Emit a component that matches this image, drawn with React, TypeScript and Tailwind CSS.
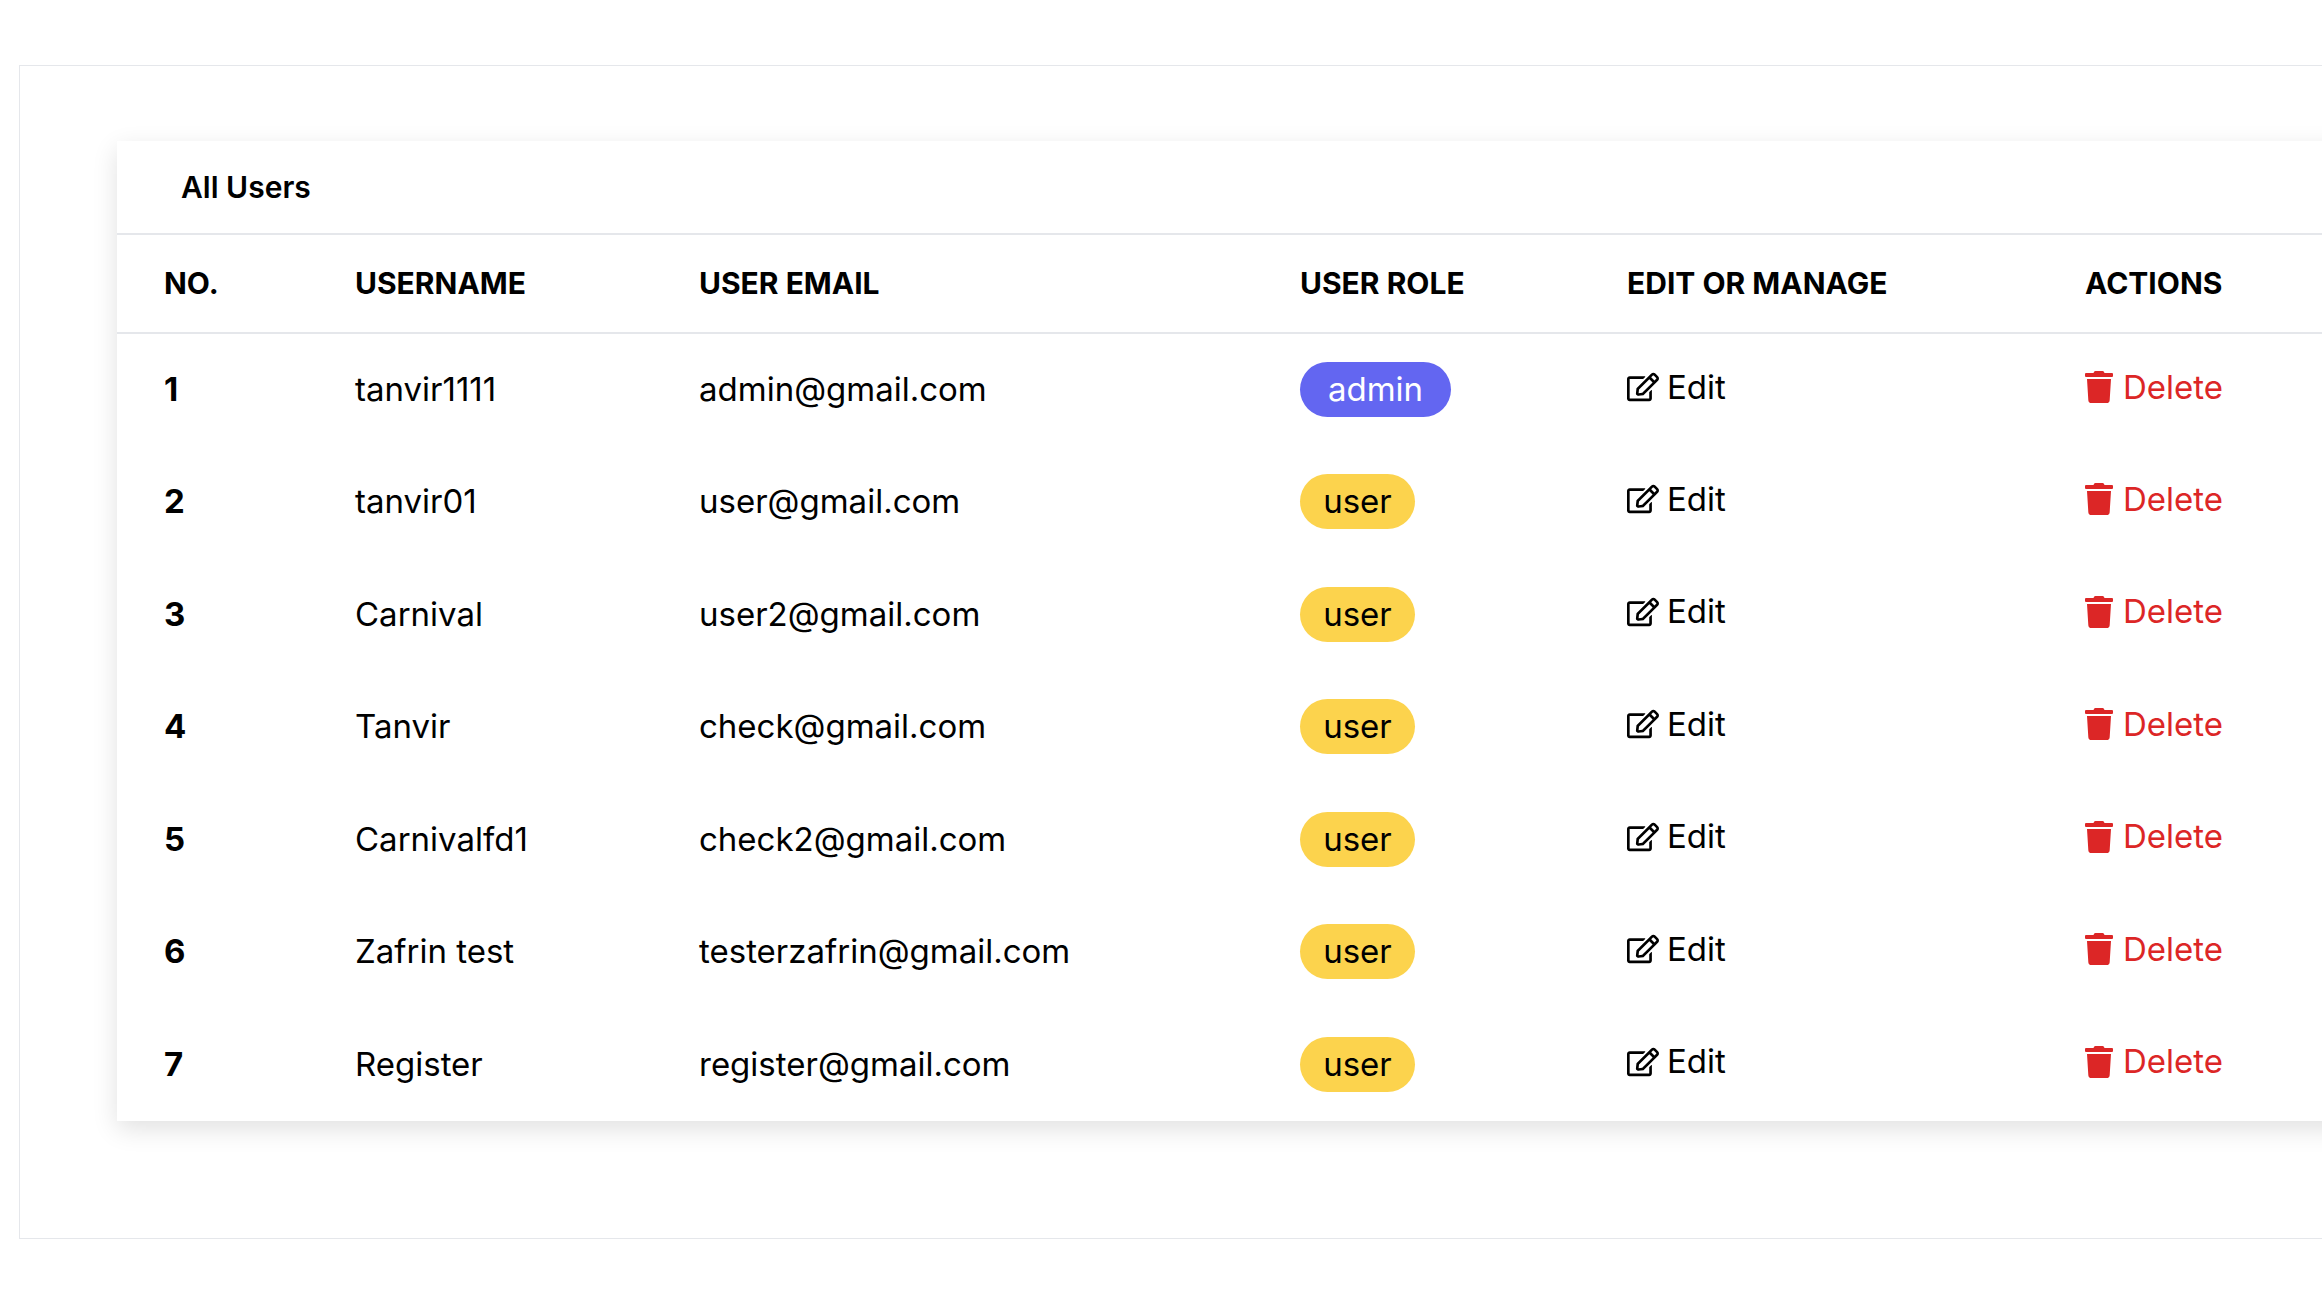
import React from "react";
import { FaRegEdit, FaTrash } from "react-icons/fa";

const users = [
  ["tanvir1111", "admin@gmail.com", "admin"],
  ["tanvir01", "user@gmail.com", "user"],
  ["Carnival", "user2@gmail.com", "user"],
  ["Tanvir", "check@gmail.com", "user"],
  ["Carnivalfd1", "check2@gmail.com", "user"],
  ["Zafrin test", "testerzafrin@gmail.com", "user"],
  ["Register", "register@gmail.com", "user"],
];

export default function App() {
  return (
    <div className="w-[2322px] h-[1306px] bg-white overflow-hidden pt-[65px] pl-[19px]" style={{ fontFamily: "Inter, 'Open Sans', sans-serif" }}>
      <div className="w-[2400px] h-[1174px] border border-gray-200 pl-[97px] pt-[75px]">
        <div className="w-[2300px] bg-white shadow-[0_8px_24px_rgba(0,0,0,0.12)] text-black">
          <div className="h-[94px] flex items-center pl-[64px] text-[30px] font-semibold border-b-2 border-gray-200">All Users</div>
          <table className="table-fixed border-collapse text-left">
            <colgroup>
              <col className="w-[238px]" />
              <col className="w-[344px]" />
              <col className="w-[601px]" />
              <col className="w-[327px]" />
              <col className="w-[458px]" />
              <col className="w-[330px]" />
            </colgroup>
            <thead>
              <tr className="h-[98px] border-b-2 border-gray-200 text-[30px] font-bold">
                <th className="pl-[47px]">NO.</th>
                <th>USERNAME</th>
                <th>USER EMAIL</th>
                <th>USER ROLE</th>
                <th>EDIT OR MANAGE</th>
                <th>ACTIONS</th>
              </tr>
            </thead>
            <tbody className="text-[33px]">
              {users.map(([n, e, r], i) => (
                <tr key={i} className="h-[112.5px]">
                  <td className="pl-[47px] font-bold">{i + 1}</td>
                  <td>{n}</td>
                  <td>{e}</td>
                  <td>
                    {r === "admin" ? (
                      <span className="inline-flex items-center justify-center h-[55px] w-[151px] rounded-full bg-[#6366f1] text-white">admin</span>
                    ) : (
                      <span className="inline-flex items-center justify-center h-[55px] w-[115px] rounded-full bg-[#fcd34d]">user</span>
                    )}
                  </td>
                  <td>
                    <span className="inline-flex items-center gap-[8px]"><FaRegEdit className="w-[32px] h-[32px]" />Edit</span>
                  </td>
                  <td>
                    <span className="inline-flex items-center gap-[10px] text-[#dc2626]"><FaTrash className="w-[28px] h-[32px]" />Delete</span>
                  </td>
                </tr>
              ))}
            </tbody>
          </table>
        </div>
      </div>
    </div>
  );
}
